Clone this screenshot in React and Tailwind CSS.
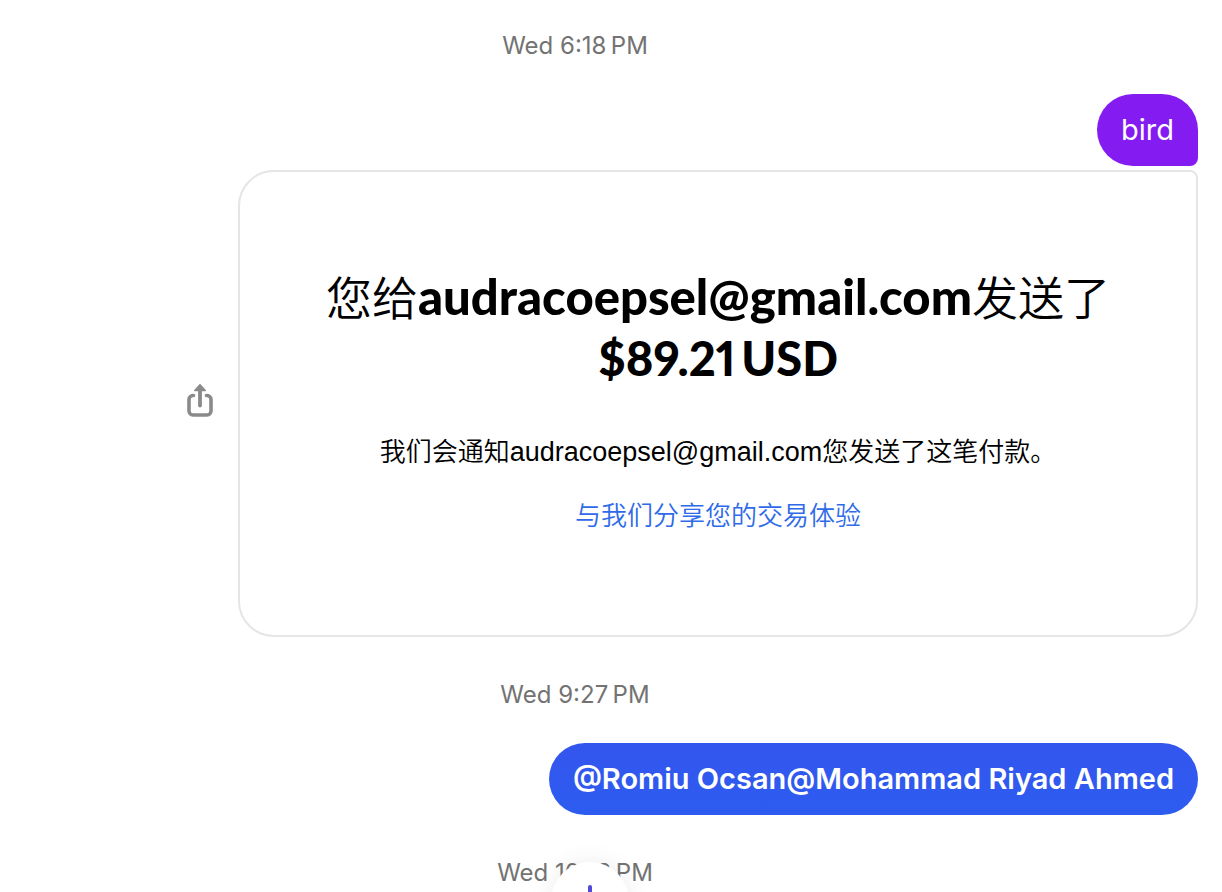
function Timestamp({ children }) {
  return (
    <time className="block pr-[72px] text-center text-[24px] leading-8 text-[#737373]">
      {children}
    </time>
  );
}

function ShareButton() {
  return (
    <button type="button" aria-label="Share" className="flex size-10 shrink-0 items-center justify-center text-[#8a8a8a]">
      <svg width="32" height="40" viewBox="0 0 32 40" fill="none" aria-hidden="true">
        <path
          d="M9.500 11.500H9a4 4 0 0 0-4 4V27a4 4 0 0 0 4 4h14a4 4 0 0 0 4-4V15.500a4 4 0 0 0-4-4h-.500"
          stroke="currentColor"
          strokeWidth="3.600"
          strokeLinecap="round"
        />
        <path d="M16 6v15.500" stroke="currentColor" strokeWidth="3.800" strokeLinecap="round" />
        <path d="M16 .700L21.200 6.500H10.800Z" fill="currentColor" stroke="currentColor" strokeWidth="1.500" strokeLinejoin="round" />
      </svg>
    </button>
  );
}

export default function App() {
  return (
    <main className="relative h-screen overflow-hidden bg-white font-['Inter','Noto_Sans_CJK_SC',sans-serif]">
      <div className="flex flex-col pt-[30px]">
        <Timestamp>Wed 6:18{'\u2009'}PM</Timestamp>

        <section className="mt-8 flex flex-col items-end gap-1 pr-6">
          <p className="rounded-[36px] rounded-br-lg bg-[#841cf2] px-6 py-4 text-[29px] leading-10 text-white">
            bird
          </p>
          <div className="flex w-full items-center gap-[18px] pl-[180px]">
            <ShareButton />
            <article className="flex-1 rounded-[36px] rounded-tr-lg border-2 border-[#e5e5e5] px-10 pt-[94px] pb-[99px] text-center text-black">
              <h1 className="text-[46px] leading-[60px] font-[350]">
                您给
                <span className="font-['Lato',sans-serif] text-[49px] font-black">audracoepsel@gmail.com</span>
                发送了
                <br />
                <span className="font-['Lato',sans-serif] text-[47px] font-black proportional-nums">$89.21{'\u2009'}USD</span>
              </h1>
              <p className="mt-[43px] font-['Liberation_Sans','Noto_Sans_CJK_SC',sans-serif] text-[26px] leading-10 font-[350]">
                我们会通知<span className="text-[27px]">audracoepsel@gmail.com</span>您发送了这笔付款。
              </p>
              <a href="#feedback" className="mt-6 inline-block text-[26px] leading-10 font-[350] text-[#2f6be8]">
                与我们分享您的交易体验
              </a>
            </article>
          </div>
        </section>

        <div className="mt-[42px]">
          <Timestamp>Wed 9:27{'\u2009'}PM</Timestamp>
        </div>

        <section className="mt-8 flex justify-end pr-6">
          <p className="rounded-full bg-linear-to-b from-[#3355ee] to-[#2d5cf0] px-6 py-4 text-[29px] leading-10 font-semibold text-white">
            @Romiu Ocsan@Mohammad Riyad Ahmed
          </p>
        </section>

        <div className="mt-[42px]">
          <Timestamp>Wed 10:18{'\u2009'}PM</Timestamp>
        </div>
      </div>

      <div className="absolute inset-x-0 -bottom-12 flex justify-center pr-[42px]">
        <button
          type="button"
          aria-label="Scroll to latest message"
          className="flex size-[78px] items-start justify-center rounded-full bg-white pt-[22px] text-[#5148dc] shadow-[0_0_24px_rgba(0,0,0,0.08)]"
        >
          <svg width="32" height="32" viewBox="0 0 32 32" fill="none" stroke="currentColor" strokeWidth="4" strokeLinecap="round" strokeLinejoin="round" aria-hidden="true">
            <path d="M16 3v26M5 18l11 11 11-11" />
          </svg>
        </button>
      </div>
    </main>
  );
}
